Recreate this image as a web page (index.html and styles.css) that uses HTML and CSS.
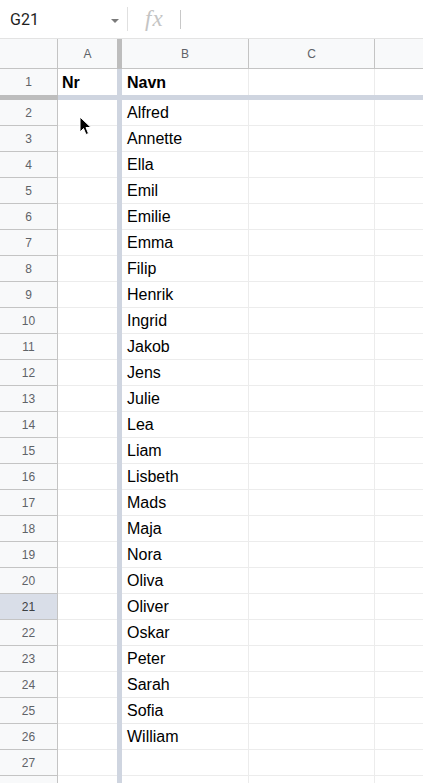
FILE: index.html
```html
<!DOCTYPE html>
<html lang="no">
<head>
    <meta charset="UTF-8">
    <meta name="viewport" content="width=device-width, initial-scale=1.0">
    <title>Navneliste</title>
    <link rel="stylesheet" href="styles.css">
</head>
<body>
    <div class="formula-bar">
        <div class="name-box">
            <span>G21</span>
            <span class="caret"></span>
        </div>
        <div class="fx">fx</div>
        <div class="text-cursor"></div>
    </div>

    <div class="sheet" id="sheet">
        <div class="row col-head">
            <div class="rh"></div>
            <div class="cell a">A</div>
            <div class="freeze"></div>
            <div class="cell b">B</div>
            <div class="cell c">C</div>
            <div class="cell d"></div>
        </div>
        <div class="row first">
            <div class="rh">1</div>
            <div class="cell a bold">Nr</div>
            <div class="freeze"></div>
            <div class="cell b bold">Navn</div>
            <div class="cell c"></div>
            <div class="cell d"></div>
        </div>
        <div class="freeze-row">
            <div class="rh"></div>
            <div class="rest"></div>
        </div>
        <!-- rows 2..27 get added below, plus the cut-off edge of 28 -->
    </div>

    <svg class="mouse" width="14" height="21" viewBox="0 0 14 21">
        <path d="M1 1 L1 16 L4.5 12.5 L7 18.5 L9.5 17.5 L7 11.5 L12 11.5 Z" fill="#000" stroke="#fff" stroke-width="1"/>
    </svg>

    <script>
        const names = ['Alfred', 'Annette', 'Ella', 'Emil', 'Emilie', 'Emma', 'Filip', 'Henrik',
            'Ingrid', 'Jakob', 'Jens', 'Julie', 'Lea', 'Liam', 'Lisbeth', 'Mads', 'Maja', 'Nora',
            'Oliva', 'Oliver', 'Oskar', 'Peter', 'Sarah', 'Sofia', 'William'];

        const sheet = document.getElementById('sheet');

        for (let n = 2; n <= 28; n++) {
            const row = document.createElement('div');
            row.className = n === 21 ? 'row selected' : 'row';
            // row 28 only peeks in at the bottom edge, its number is out of view
            const label = n < 28 ? n : '';
            row.innerHTML = `
                <div class="rh">${label}</div>
                <div class="cell a"></div>
                <div class="freeze"></div>
                <div class="cell b">${names[n - 2] || ''}</div>
                <div class="cell c"></div>
                <div class="cell d"></div>
            `;
            sheet.appendChild(row);
        }
    </script>
</body>
</html>
```

FILE: styles.css
```css
body {
    margin: 0;
    padding: 0;
    background-color: #fff;
    font-family: "Liberation Sans", Arial, sans-serif;
    color: #000;
    overflow: hidden;
    height: 783px;
}
.formula-bar {
    display: flex;
    align-items: center;
    height: 39px;
    box-sizing: border-box;
    border-bottom: 1px solid #e3e3e3;
}
.name-box {
    display: flex;
    align-items: center;
    justify-content: space-between;
    width: 128px;
    box-sizing: border-box;
    padding: 0 8px 0 10px;
    height: 24px;
    border-right: 1px solid #e0e0e0;
    font-family: Roboto, "Liberation Sans", sans-serif;
    font-size: 16px;
    color: #1f1f1f;
}
.caret {
    width: 0;
    height: 0;
    border-left: 4px solid transparent;
    border-right: 4px solid transparent;
    border-top: 4px solid #7a7a7a;
    margin-top: 3px;
}
.fx {
    margin-left: 17px;
    font-family: "Liberation Serif", serif;
    font-style: italic;
    font-size: 23px;
    color: #c4c4c4;
    letter-spacing: 1px;
}
.text-cursor {
    width: 1px;
    height: 19px;
    background-color: #c8c8c8;
    margin-left: 16px;
}
.row {
    display: flex;
    height: 26px;
    box-sizing: border-box;
}
.rh {
    width: 58px;
    flex-shrink: 0;
    box-sizing: border-box;
    border-right: 1px solid #c4c4c4;
    border-bottom: 1px solid #c4c4c4;
    background-color: #f8f9fa;
    font-size: 12px;
    color: #5f6368;
    display: flex;
    align-items: center;
    justify-content: center;
}
.cell {
    box-sizing: border-box;
    border-bottom: 1px solid #ececec;
    display: flex;
    align-items: center;
    padding-top: 1px;
    font-size: 16px;
    white-space: nowrap;
}
.cell.a {
    width: 59px;
    padding-left: 4px;
}
.cell.b {
    width: 127px;
    padding-left: 5px;
    border-right: 1px solid #ececec;
}
.cell.c {
    width: 126px;
    border-right: 1px solid #ececec;
}
.cell.d {
    flex: 1;
}
.freeze {
    width: 5px;
    flex-shrink: 0;
    background-color: #cfd5e0;
}
.bold {
    font-weight: bold;
}
.col-head {
    height: 30px;
}
.col-head .rh,
.col-head .cell {
    background-color: #f8f9fa;
    border-bottom: 1px solid #c4c4c4;
    font-size: 12px;
    color: #5f6368;
    justify-content: center;
    padding: 0;
}
.col-head .cell.b,
.col-head .cell.c {
    border-right: 1px solid #c4c4c4;
}
.col-head .freeze {
    background-color: #bdbdbd;
}
.first .rh,
.first .cell {
    border-bottom: none;
}
.freeze-row {
    display: flex;
    height: 5px;
}
.freeze-row .rh {
    height: 5px;
    border: none;
    background-color: #bdbdbd;
}
.freeze-row .rest {
    flex: 1;
    background-color: #cfd5e0;
}
.selected .rh {
    background-color: #d9dee8;
    color: #3c4043;
}
.mouse {
    position: absolute;
    left: 79px;
    top: 116px;
}
```
